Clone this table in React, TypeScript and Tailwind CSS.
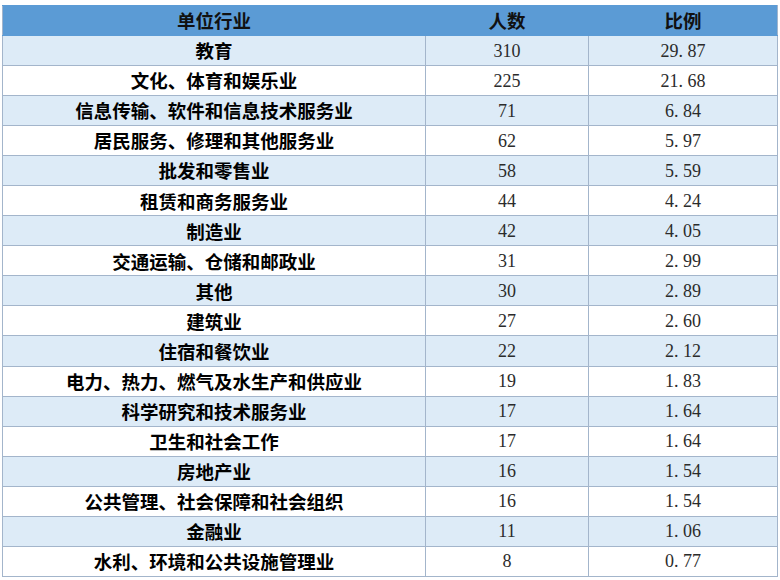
import React from 'react';

const rows: [string, number, string][] = [
  ['教育', 310, '29.87'],
  ['文化、体育和娱乐业', 225, '21.68'],
  ['信息传输、软件和信息技术服务业', 71, '6.84'],
  ['居民服务、修理和其他服务业', 62, '5.97'],
  ['批发和零售业', 58, '5.59'],
  ['租赁和商务服务业', 44, '4.24'],
  ['制造业', 42, '4.05'],
  ['交通运输、仓储和邮政业', 31, '2.99'],
  ['其他', 30, '2.89'],
  ['建筑业', 27, '2.60'],
  ['住宿和餐饮业', 22, '2.12'],
  ['电力、热力、燃气及水生产和供应业', 19, '1.83'],
  ['科学研究和技术服务业', 17, '1.64'],
  ['卫生和社会工作', 17, '1.64'],
  ['房地产业', 16, '1.54'],
  ['公共管理、社会保障和社会组织', 16, '1.54'],
  ['金融业', 11, '1.06'],
  ['水利、环境和公共设施管理业', 8, '0.77'],
];

const cjk = { fontFamily: '"Noto Sans CJK SC", sans-serif' };
const num = { fontFamily: '"Liberation Serif", serif' };

// SimSun-style ratio: the period takes a full half-width cell
function Ratio({ v }: { v: string }) {
  const [a, b] = v.split('.');
  return (
    <span>
      {a}
      <span className="inline-block w-[9px] text-left">.</span>
      {b}
    </span>
  );
}

export default function App() {
  return (
    <div className="w-[780px] h-[580px] bg-white pt-[5px] pl-[2px]">
      <table className="border-collapse table-fixed w-[775px] text-[18px] text-[#111]">
        <colgroup>
          <col className="w-[423px]" />
          <col className="w-[163px]" />
          <col className="w-[189px]" />
        </colgroup>
        <thead>
          <tr className="h-[30px] bg-[#5b9bd5]">
            <th className="border border-[#5b9bd5] border-l-[#a3b5cb] font-bold text-center p-0 leading-none text-[18.5px]" style={cjk}>
              单位行业
            </th>
            <th className="border border-[#5b9bd5] font-bold text-center p-0 leading-none text-[18.5px]" style={cjk}>
              人数
            </th>
            <th className="border border-[#5b9bd5] border-r-[#a3b5cb] font-bold text-center p-0 leading-none text-[18.5px]" style={cjk}>
              比例
            </th>
          </tr>
        </thead>
        <tbody>
          {rows.map(([name, n, r], i) => (
            <tr key={name} className={`h-[30.05px] ${i % 2 === 0 ? 'bg-[#ddebf7]' : 'bg-white'}`}>
              <td className="border border-[#a3b5cb] text-center font-bold p-0 leading-none text-[18.5px] text-black" style={cjk}>
                {name}
              </td>
              <td className="border border-[#a3b5cb] text-center p-0 leading-none text-[#2b2b2b]" style={num}>
                {n}
              </td>
              <td className="border border-[#a3b5cb] text-center p-0 leading-none text-[#2b2b2b]" style={num}>
                <Ratio v={r} />
              </td>
            </tr>
          ))}
        </tbody>
      </table>
    </div>
  );
}
